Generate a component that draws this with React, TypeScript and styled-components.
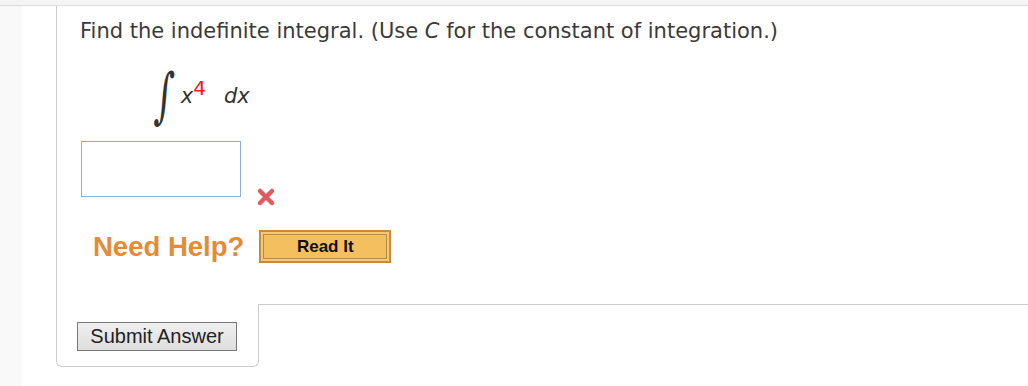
import React from 'react';
import styled, { createGlobalStyle } from 'styled-components';

const GlobalStyle = createGlobalStyle`
  body {
    margin: 0;
    background: #ffffff;
    font-family: "DejaVu Sans", Verdana, sans-serif;
  }
`;

const Page = styled.div`
  width: 1028px;
  height: 386px;
  overflow: hidden;
`;

const TopBand = styled.div`
  height: 5px;
  background: #f4f4f4;
  border-bottom: 1px solid #dcdcdc;
`;

const Body = styled.div`
  display: flex;
`;

const Gutter = styled.div`
  width: 56px;
  flex: none;
  background: linear-gradient(to right, #f9f9f9 0, #f9f9f9 22px, #ffffff 22px);
  height: 380px;
`;

const Main = styled.div`
  flex: 1;
  display: flex;
  flex-direction: column;
`;

const QuestionPanel = styled.div`
  border-left: 1px solid #cccccc;
  height: 298px;
  box-sizing: border-box;
  padding: 13px 0 0 23px;
`;

const Prompt = styled.div`
  font-size: 21px;
  line-height: 24px;
  color: #3a3a3a;
`;

const Integral = styled.div`
  display: flex;
  align-items: center;
  margin: 24px 0 0 74px;
  height: 56px;
  color: #333;
`;

const IntegralSign = styled.span`
  font-family: "DejaVu Serif", serif;
  font-size: 40px;
  display: inline-block;
  transform: scale(0.9, 1.5) skewX(-6deg);
  margin-right: 6px;
  line-height: 1;
`;

const Expr = styled.span`
  font-size: 21px;
  font-style: italic;
  margin-top: -6px;
`;

const Power = styled.sup`
  color: #e8201a;
  font-style: normal;
  font-size: 20px;
  margin-right: 18px;
`;

const AnswerRow = styled.div`
  display: flex;
  align-items: flex-end;
  gap: 15px;
  margin: 18px 0 0 1px;
`;

const AnswerInput = styled.input`
  width: 160px;
  height: 56px;
  box-sizing: border-box;
  border: 1px solid #8fb0da;
  background: #fff;
  outline: none;
`;

const WrongMark = styled.svg`
  width: 20px;
  height: 20px;
  margin-bottom: -10px;
`;

const HelpRow = styled.div`
  display: flex;
  align-items: center;
  gap: 15px;
  margin: 33px 0 0 13px;
`;

const HelpLabel = styled.span`
  font-family: "Liberation Sans", Arial, sans-serif;
  font-weight: bold;
  font-size: 27.5px;
  color: #e48b35;
`;

const ReadButton = styled.button`
  width: 132px;
  height: 33px;
  box-sizing: border-box;
  background: #f4bf5e;
  border: 2px solid #c78a3e;
  box-shadow: inset 0 0 0 2px #f6c978, inset 0 0 0 3px #b88a48;
  font-family: "Liberation Sans", Arial, sans-serif;
  font-weight: bold;
  font-size: 17px;
  color: #111;
  padding: 0;
  cursor: pointer;
`;

const Footer = styled.div`
  display: flex;
`;

const SubmitBox = styled.div`
  width: 203px;
  height: 63px;
  box-sizing: border-box;
  border: 1px solid #cccccc;
  border-top: none;
  border-radius: 0 0 6px 6px;
  padding: 18px 0 0 20px;
`;

const Filler = styled.div`
  flex: 1;
  border-top: 1px solid #cccccc;
`;

const SubmitButton = styled.button`
  width: 160px;
  height: 29px;
  box-sizing: border-box;
  background: linear-gradient(#efefef, #dedede);
  border: 1px solid #777;
  font-family: "Liberation Sans", Arial, sans-serif;
  font-size: 20px;
  color: #222;
  padding: 0;
`;

export default function App() {
  return (
    <Page>
      <GlobalStyle />
      <TopBand />
      <Body>
        <Gutter />
        <Main>
          <QuestionPanel>
            <Prompt>
              Find the indefinite integral. (Use <i>C</i> for the constant of integration.)
            </Prompt>
            <Integral>
              <IntegralSign>∫</IntegralSign>
              <Expr>
                x<Power>4</Power>dx
              </Expr>
            </Integral>
            <AnswerRow>
              <AnswerInput type="text" />
              <WrongMark viewBox="0 0 20 20">
                <path d="M4 4 L16 16 M16 4 L4 16" stroke="#e25a5c" strokeWidth="4.5" strokeLinecap="round" />
              </WrongMark>
            </AnswerRow>
            <HelpRow>
              <HelpLabel>Need Help?</HelpLabel>
              <ReadButton>Read It</ReadButton>
            </HelpRow>
          </QuestionPanel>
          <Footer>
            <SubmitBox>
              <SubmitButton>Submit Answer</SubmitButton>
            </SubmitBox>
            <Filler />
          </Footer>
        </Main>
      </Body>
    </Page>
  );
}
